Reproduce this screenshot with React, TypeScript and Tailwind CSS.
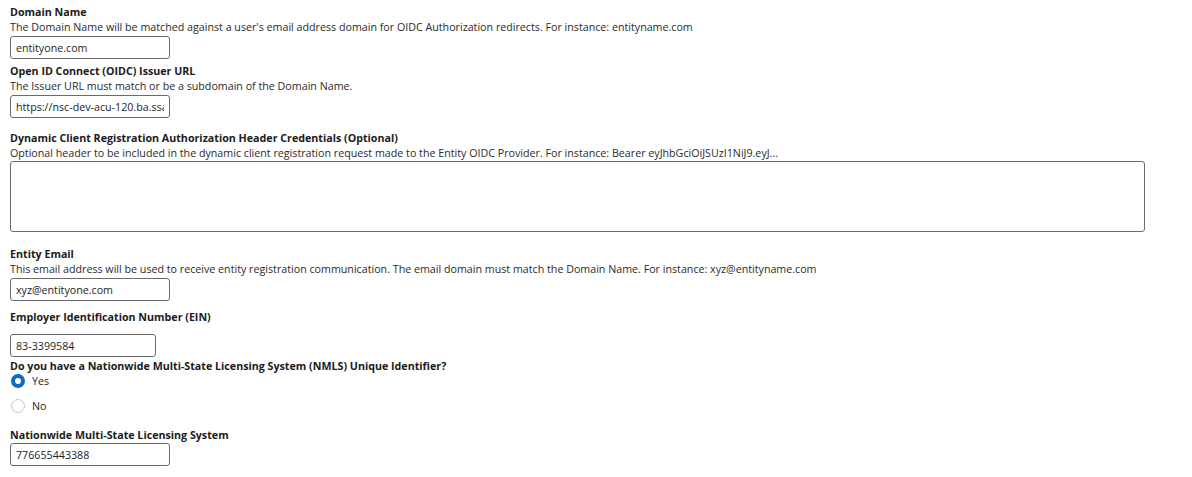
import React from "react";

const font = { fontFamily: '"Open Sans", "Noto Sans", sans-serif' };

function Label({ children, className = "" }: { children: React.ReactNode; className?: string }) {
  return <div className={`text-[10.7px] leading-[15px] font-bold text-[#1b1b1b] ${className}`}>{children}</div>;
}

function Hint({ children }: { children: React.ReactNode }) {
  return <div className="text-[10.7px] leading-[15px] text-[#2b2b2b]">{children}</div>;
}

function TextBox({ value, width, className = "" }: { value: string; width: string; className?: string }) {
  return (
    <input
      readOnly
      value={value}
      className={`${width} h-[23px] border border-[#6b6b6b] rounded-[3px] px-[5px] text-[10.7px] text-[#242424] bg-white outline-none ${className}`}
      style={font}
    />
  );
}

function Radio({ label, checked }: { label: string; checked?: boolean }) {
  return (
    <div className="flex items-center h-[18px]">
      {checked ? (
        <span className="ml-[1px] w-[14px] h-[14px] rounded-full border-[4px] border-[#0f6cbd] bg-white" />
      ) : (
        <span className="ml-[1px] w-[14px] h-[14px] rounded-full border border-[#c6c6c6] bg-white" />
      )}
      <span className="ml-[7px] text-[10.7px] leading-[15px] text-[#242424]">{label}</span>
    </div>
  );
}

export default function App() {
  return (
    <div className="w-[1192px] h-[477px] bg-white pl-[10px] pt-[5px]" style={font}>
      <Label>Domain Name</Label>
      <Hint>
        The Domain Name will be matched against a user's email address domain for OIDC Authorization redirects. For
        instance: entityname.com
      </Hint>
      <TextBox value="entityone.com" width="w-[160px]" className="mt-[1px] block h-[22px]" />

      <Label className="mt-[5px]">Open ID Connect (OIDC) Issuer URL</Label>
      <Hint>The Issuer URL must match or be a subdomain of the Domain Name.</Hint>
      <TextBox value="https://nsc-dev-acu-120.ba.ssa.gov" width="w-[160px]" className="mt-[1px] block h-[22px]" />

      <Label className="mt-[13px]">Dynamic Client Registration Authorization Header Credentials (Optional)</Label>
      <Hint>
        Optional header to be included in the dynamic client registration request made to the Entity OIDC Provider. For
        instance: Bearer eyJhbGciOiJSUzI1NiJ9.eyJ...
      </Hint>
      <textarea
        readOnly
        className="block w-[1135px] h-[71px] border border-[#6b6b6b] rounded-[3px] resize-none bg-white outline-none"
      />

      <Label className="mt-[15px]">Entity Email</Label>
      <Hint>
        This email address will be used to receive entity registration communication. The email domain must match the
        Domain Name. For instance: xyz@entityname.com
      </Hint>
      <TextBox value="xyz@entityone.com" width="w-[160px]" className="mt-[1px] block" />

      <Label className="mt-[9px]">Employer Identification Number (EIN)</Label>
      <TextBox value="83-3399584" width="w-[146px]" className="mt-[9px] block h-[22px]" />

      <Label className="mt-[2px]">Do you have a Nationwide Multi-State Licensing System (NMLS) Unique Identifier?</Label>
      <div className="flex flex-col gap-[7px] -mt-[2px]">
        <Radio label="Yes" checked />
        <Radio label="No" />
      </div>

      <Label className="mt-[13px]">Nationwide Multi-State Licensing System</Label>
      <TextBox value="776655443388" width="w-[160px]" className="block" />
    </div>
  );
}
